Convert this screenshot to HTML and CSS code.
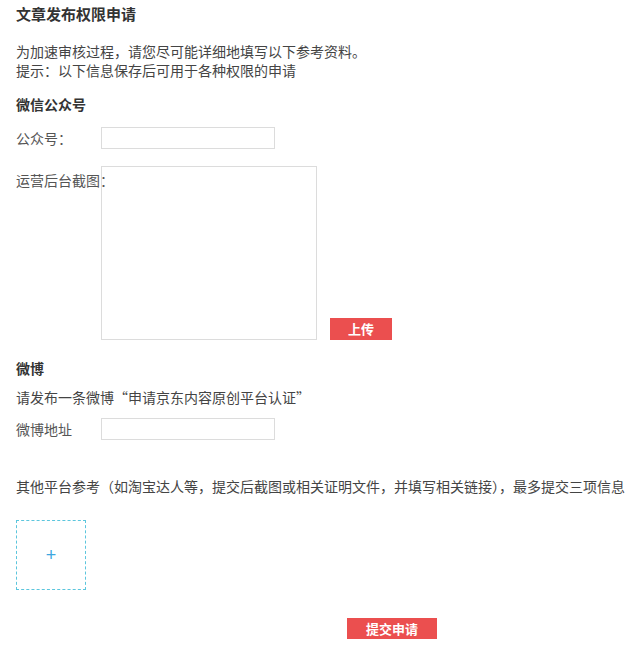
FILE: index.html
```html
<!DOCTYPE html>
<html lang="zh-CN">
<head>
  <meta charset="UTF-8" />
  <title>文章发布权限申请</title>
  <link rel="stylesheet" href="styles.css">
</head>
<body>
  <div class="page">
    <h2 class="title">文章发布权限申请</h2>
    <p class="intro">
      为加速审核过程，请您尽可能详细地填写以下参考资料。<br />
      提示：以下信息保存后可用于各种权限的申请
    </p>

    <!-- 微信公众号 -->
    <h3 class="section-title">微信公众号</h3>
    <div class="form-row">
      <label class="form-label">公众号：</label>
      <input class="text-input" type="text" name="wechat" />
    </div>
    <div class="form-row form-row-top">
      <label class="form-label form-label-top">运营后台截图：</label>
      <textarea class="shot-area" name="shot"></textarea>
      <button class="btn btn-upload" type="button">上传</button>
    </div>

    <!-- 微博 -->
    <h3 class="section-title section-weibo">微博</h3>
    <p class="tip">请发布一条微博“申请京东内容原创平台认证”</p>
    <div class="form-row form-row-weibo">
      <label class="form-label">微博地址</label>
      <input class="text-input" type="text" name="weibo" />
    </div>

    <!-- 其他平台 -->
    <p class="other">其他平台参考（如淘宝达人等，提交后截图或相关证明文件，并填写相关链接），最多提交三项信息</p>
    <div class="add-box">+</div>

    <div class="submit-wrap">
      <button class="btn btn-submit" type="submit">提交申请</button>
    </div>
  </div>
</body>
</html>
```

FILE: styles.css
```css
* {
  margin: 0;
  padding: 0;
  box-sizing: border-box;
}

body {
  font-family: "Noto Sans CJK SC", "Liberation Sans", sans-serif;
  font-size: 14px;
  color: #444;
  background: #fff;
}

.page {
  width: 639px;
  padding: 4px 0 0 16px;
}

.title {
  font-size: 15px;
  line-height: 20px;
  font-weight: 700;
  color: #333;
}

.intro {
  margin-top: 18px;
  line-height: 19px;
}

.section-title {
  margin-top: 14px;
  font-size: 14px;
  line-height: 20px;
  font-weight: 700;
  color: #333;
}

.section-weibo {
  margin-top: 18px;
}

.form-row {
  display: flex;
  align-items: center;
  margin-top: 13px;
}

.form-row-top {
  align-items: flex-start;
  margin-top: 17px;
}

.form-row-weibo {
  margin-top: 11px;
}

.form-label {
  width: 85px;
  flex-shrink: 0;
  line-height: 20px;
  white-space: nowrap;
  color: #555;
}

.form-label-top {
  padding-top: 4px;
}

.text-input {
  width: 174px;
  height: 22px;
  border: 1px solid #dcdcdc;
  outline: none;
  background: #fff;
}

.shot-area {
  width: 216px;
  height: 174px;
  border: 1px solid #dcdcdc;
  background: transparent;
  resize: none;
  outline: none;
}

.btn {
  border: none;
  background: #eb4f4f;
  color: #fff;
  font-family: inherit;
  font-size: 13px;
  font-weight: 700;
  cursor: pointer;
}

.btn-upload {
  align-self: flex-end;
  width: 62px;
  height: 22px;
  margin-left: 13px;
  line-height: 22px;
}

.tip {
  margin-top: 9px;
  line-height: 20px;
}

.other {
  margin-top: 36px;
  line-height: 20px;
  white-space: nowrap;
}

.add-box {
  width: 70px;
  height: 70px;
  margin-top: 24px;
  border: 1px dashed #5cc6dd;
  display: flex;
  justify-content: center;
  align-items: center;
  color: #3ea6df;
  font-size: 18px;
  font-family: "Liberation Sans", sans-serif;
}

.submit-wrap {
  margin-top: 28px;
  padding-left: 331px;
}

.btn-submit {
  width: 90px;
  height: 21px;
  line-height: 21px;
}
```
